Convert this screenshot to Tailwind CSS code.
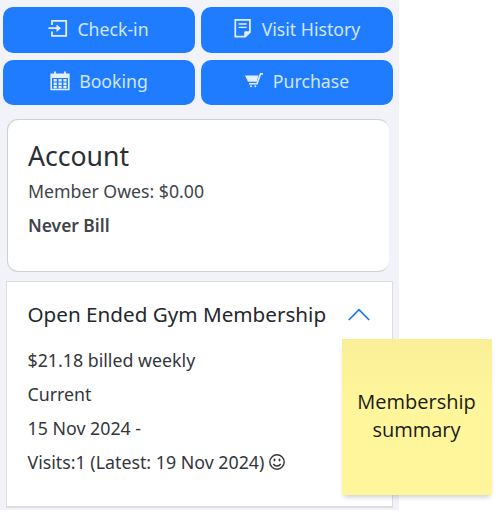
<!DOCTYPE html>
<html lang="en">
<head>
    <meta charset="UTF-8">
    <meta name="viewport" content="width=device-width, initial-scale=1.0">
    <title>Member Account</title>
    <script src="https://cdn.jsdelivr.net/npm/@tailwindcss/browser@4"></script>
    <style> body { font-family: 'Noto Sans', 'Open Sans', sans-serif; } </style>
</head>
<body class="bg-white relative w-[500px] h-[513px] overflow-hidden">

    <main class="w-[399px] h-[510px] bg-[#f2f2f9] pt-[7px] text-[17.7px] text-[#40444a]">
        <!-- Actions -->
        <nav class="grid grid-cols-2 grid-rows-[46px_45px] gap-x-[6px] gap-y-[7px] pl-[3px] pr-[6px] text-[#d2e5ff]">
            <button class="flex items-center justify-center gap-[9px] rounded-[10px] bg-[#1f7cff] pb-[2px] pr-[1px]">
                <svg class="w-5 h-5" viewBox="0 0 20 20" fill="none" stroke="#e3efff" stroke-width="1.8">
                    <path d="M4 6V1.8h14.2v15H4V12.5M.5 9.2h11"/>
                    <path d="M8.5 5.4l4.5 3.8-4.5 3.8z" fill="#e3efff" stroke="none"/>
                </svg>
                <span>Check-in</span>
            </button>
            <button class="flex items-center justify-center gap-[10px] rounded-[10px] bg-[#1f7cff] pb-[2px]">
                <svg class="w-[18px] h-5" viewBox="0 0 18 20" fill="none" stroke="#e3efff" stroke-width="1.7">
                    <path d="M1.3 .9h14.6v12.2l-4.6 4.6h-10z"/>
                    <path d="M4.6 5h8M4.6 8.4h8" stroke-width="1.3"/>
                    <path d="M10.8 17.6v-4.8h5z" fill="#e3efff" stroke-width="1"/>
                </svg>
                <span>Visit History</span>
            </button>
            <button class="flex items-center justify-center gap-[9px] rounded-[10px] bg-[#1f7cff] pb-[3px]">
                <svg class="w-5 h-5" viewBox="0 0 20 20" fill="none" stroke="#e3efff">
                    <path d="M1.2 3.2h17.6v15.3H1.2z" stroke-width="1.6"/>
                    <path d="M1 3h18v4H1z" fill="#e3efff" stroke="none"/>
                    <path d="M5 .5v3M15 .5v3" stroke-width="1.8"/>
                    <path d="M3.6 9.3h13M3.6 12.7h13M3.6 16.1h13" stroke-width="2.5" stroke-dasharray="3.2 1.7"/>
                </svg>
                <span>Booking</span>
            </button>
            <button class="flex items-center justify-center gap-[10px] rounded-[10px] bg-[#1f7cff] pb-[3px]">
                <svg class="w-[18px] h-[18px]" viewBox="0 0 18 18" fill="#e3efff">
                    <path d="M0 3.6h13.5l-1.8 6.2H3z"/>
                    <path d="M17.9 1.9h-2.4L12 11.8H4" fill="none" stroke="#e3efff" stroke-width="1.6"/>
                    <circle cx="6" cy="14.2" r="1"/>
                    <circle cx="10.3" cy="14.2" r="1"/>
                </svg>
                <span>Purchase</span>
            </button>
        </nav>

        <!-- Account -->
        <section class="mt-[14px] ml-[7px] w-[382px] h-[153px] rounded-[11px] border-y border-l border-[#cfd0d2] bg-white pl-[20px] pt-[18px]">
            <h1 class="text-[26.6px] leading-[36px] text-[#2b2f34]">Account</h1>
            <p class="leading-[34px]">Member Owes: $0.00</p>
            <p class="leading-[34px] text-[17.4px] font-semibold">Never Bill</p>
        </section>

        <!-- Membership -->
        <section class="mt-[9px] ml-[6px] w-[387px] h-[227px] border border-b-2 border-[#dcdce2] bg-white pl-[20.5px] pr-[22px] pt-[17px]">
            <div class="flex items-center justify-between leading-[30px]">
                <h2 class="text-[20.65px] text-[#24282d] whitespace-nowrap">Open Ended Gym Membership</h2>
                <svg class="w-[22px] h-[14px]" viewBox="0 0 22 14" fill="none" stroke="#1f73ee" stroke-width="1.7">
                    <path d="M.8 13L11 2.6l10.2 10.4"/>
                </svg>
            </div>
            <div class="mt-[14px] leading-[34px] text-[17.8px] text-[#33373c]">
                <p>$21.18 billed weekly</p>
                <p>Current</p>
                <p>15 Nov 2024 -</p>
                <p class="flex items-center gap-[5px] whitespace-nowrap">Visits:1 (Latest: 19 Nov 2024)
                    <svg class="w-4 h-4" viewBox="0 0 16 16" fill="none" stroke="#33373c" stroke-width="1.4">
                        <circle cx="8" cy="8" r="7.2"/>
                        <path d="M4.3 9.8c1.6 2.9 5.8 2.9 7.4 0"/>
                        <ellipse cx="5.5" cy="6" rx="1" ry="1.4" fill="#33373c" stroke="none"/>
                        <ellipse cx="10.5" cy="6" rx="1" ry="1.4" fill="#33373c" stroke="none"/>
                    </svg>
                </p>
            </div>
        </section>
    </main>

    <!-- Sticky note -->
    <aside class="absolute left-[342px] top-[339px] w-[150px] h-[156px] flex items-center justify-center pb-[2px] pr-[1px] bg-linear-to-b from-[#f8ef97] to-[#fff69b] to-40% text-center text-[20px] leading-[28px] text-[#1a1a1a] shadow-[0_4px_5px_-2px_rgba(0,0,0,0.2)] font-['Open_Sans']">
        <p>Membership<br>summary</p>
    </aside>

</body>
</html>
